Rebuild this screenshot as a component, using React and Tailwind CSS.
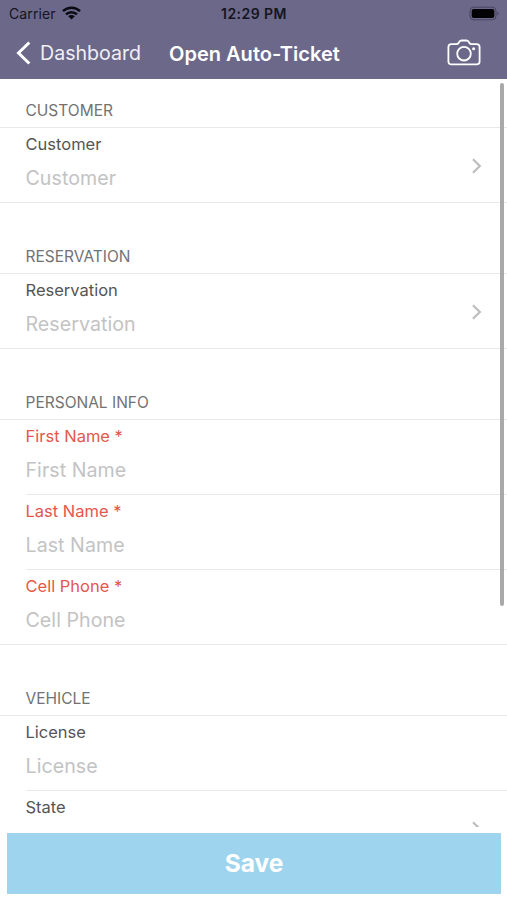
const LABEL = {
  normal: 'text-[#555555]',
  required: 'text-[#e4574c]',
};

function Chevron() {
  return (
    <svg className="mr-[25px] mt-[1px] h-[18px] w-[12px] shrink-0" viewBox="0 0 12 18" fill="none" stroke="#bdbdbd" strokeWidth="2.2">
      <path d="M3 2.2 9.8 9 3 15.8" />
    </svg>
  );
}

function Field({ label, placeholder, required, chevron, inset }) {
  return (
    <div className={inset ? 'pl-[26px]' : ''}>
      <div className={`flex h-[75px] items-center border-b border-[#e9e9ea] ${inset ? '' : 'pl-[26px]'}`}>
        <div className="-ml-[0.5px] flex h-full grow flex-col">
          <div className={`h-[32px] whitespace-nowrap text-[16.5px] leading-[32px] ${required ? LABEL.required : LABEL.normal}`}>
            {label}
            {required ? ' *' : ''}
          </div>
          {placeholder && (
            <div className="h-[37px] whitespace-nowrap text-[19.6px] leading-[37px] tracking-[0.05px] text-[#c3c3c4]">{placeholder}</div>
          )}
        </div>
        {chevron && <Chevron />}
      </div>
    </div>
  );
}

function SectionTitle({ children, className }) {
  return (
    <div className={`flex items-end border-b border-[#e9e9ea] pl-[25.5px] text-[15.5px] leading-[33px] text-[#727274] ${className}`}>
      {children}
    </div>
  );
}

export default function App() {
  return (
    <div className="flex h-[900px] w-[507px] flex-col overflow-hidden bg-white font-['Inter','Liberation_Sans',sans-serif]">
      <header className="h-[79px] shrink-0 bg-[#6b688a]">
        <div className="grid h-[27px] grid-cols-3 items-center pl-[9px] pr-[8px] text-[14px] text-[#151420]">
          <div className="flex items-center gap-[6px]">
            <span className="tracking-[0.1px]">Carrier</span>
            <svg className="-mt-[2px] h-[14px] w-[19px]" viewBox="0 0 19 14" fill="none" stroke="#0b0a12" strokeWidth="2.5">
              <path d="M1 5.2a12.2 12.2 0 0 1 17 0" />
              <path d="M4 8.4a7.8 7.8 0 0 1 11 0" />
              <path d="M9.5 13.6 6.2 10.3a4.7 4.7 0 0 1 6.6 0Z" fill="#0b0a12" stroke="none" />
            </svg>
          </div>
          <span className="text-center text-[14px] font-semibold tracking-[0.45px]">12:29 PM</span>
          <svg className="h-[15px] w-[30px] justify-self-end" viewBox="0 0 30 15">
            <rect x="1" y="1.2" width="26" height="12.6" rx="3.8" fill="none" stroke="#484561" strokeWidth="1" />
            <rect x="2.7" y="3" width="22.6" height="9" rx="2" fill="#030306" />
            <path d="M28.3 5.6q2.4 1.9 0 3.8Z" fill="#484561" />
          </svg>
        </div>
        <div className="flex h-[52px] items-center text-white">
          <svg className="-mt-[1px] ml-[15px] h-[24px] w-[17px]" viewBox="0 0 17 24" fill="none" stroke="currentColor" strokeWidth="3">
            <path d="M14.3 1.5 3.5 12l10.8 10.5" />
          </svg>
          <span className="ml-[8px] mt-px w-[101px] whitespace-nowrap text-[19.6px] text-[#f0eff6]">Dashboard</span>
          <span className="ml-[28px] mt-px whitespace-nowrap text-[20px] font-semibold tracking-[0.02px]">Open Auto-Ticket</span>
          <svg className="-mt-[2px] ml-auto mr-[26px] h-[27px] w-[34px]" viewBox="0 0 34 27" fill="none" stroke="currentColor" strokeWidth="1.8">
            <path d="M4.3 5.2h5.2c1 0 1.5-.4 2-1.2l1-1.4c.5-.8 1-1.1 2-1.1h5c1 0 1.5.3 2 1.1l1 1.4c.5.8 1 1.2 2 1.2h5.2c1.8 0 2.9 1.1 2.9 2.9v14.4c0 1.8-1.1 2.9-2.9 2.9H4.3c-1.8 0-2.9-1.1-2.9-2.9V8.1c0-1.8 1.1-2.9 2.9-2.9Z" />
            <circle cx="17" cy="14.7" r="6.8" />
            <circle cx="26.6" cy="9.8" r="1.5" fill="currentColor" stroke="none" />
          </svg>
        </div>
      </header>

      <div className="relative h-[748px] shrink-0 overflow-hidden">
        <SectionTitle className="h-[49px]">CUSTOMER</SectionTitle>
        <Field label="Customer" placeholder="Customer" chevron />
        <SectionTitle className="h-[71px]">RESERVATION</SectionTitle>
        <Field label="Reservation" placeholder="Reservation" chevron />
        <SectionTitle className="h-[71px]">PERSONAL INFO</SectionTitle>
        <Field label="First Name" placeholder="First Name" required inset />
        <Field label="Last Name" placeholder="Last Name" required inset />
        <Field label="Cell Phone" placeholder="Cell Phone" required />
        <SectionTitle className="h-[71px]">VEHICLE</SectionTitle>
        <Field label="License" placeholder="License" inset />
        <Field label="State" chevron />
        <div className="absolute right-[3px] top-[4px] h-[523px] w-[4px] rounded-full bg-[#a9a9a9]" />
      </div>

      <button className="ml-[7px] mr-[6px] mt-[6px] h-[61px] shrink-0 bg-[#9fd4ef] text-[24.5px] font-bold text-white">Save</button>
    </div>
  );
}
